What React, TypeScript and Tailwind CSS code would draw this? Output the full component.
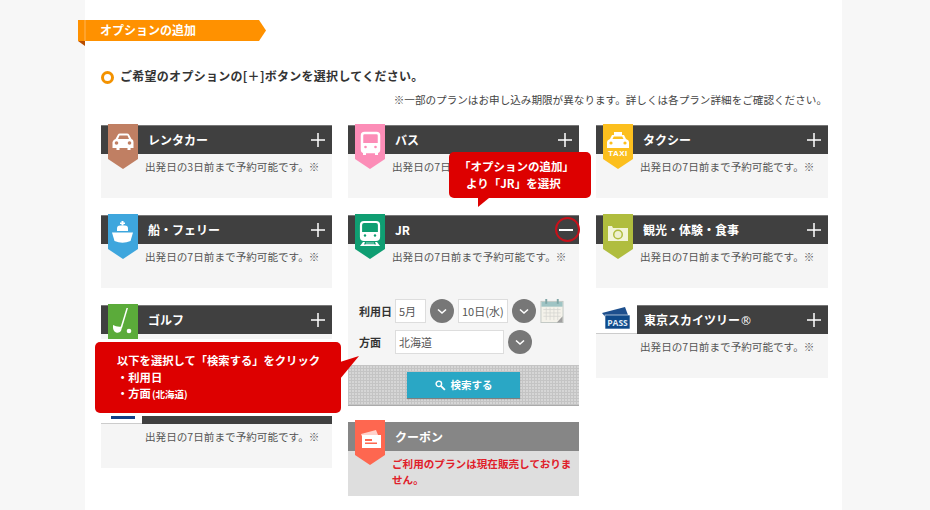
import React from "react";

function Tab({ color, children }: { color: string; children: React.ReactNode }) {
  return (
    <div className="absolute left-[7px] top-[-2px] w-[30px] h-[45px]">
      <svg width="30" height="45" viewBox="0 0 30 45" className="block">
        <path d="M0 0H30V35L15 45L0 35Z" fill={color} />
        {children}
      </svg>
    </div>
  );
}

const Car = () => (
  <g fill="#fff">
    <path d="M7.500 15 L10 10.500 Q10.500 9.500 12 9.500 H19 Q20.500 9.500 21 10.500 L23.500 15 Q25.500 15.500 25.500 18 V24 H22.500 V26 H19.500 V24 H11.500 V26 H8.500 V24 H4.500 V18 Q5.500 15.500 7.500 15Z" />
    <path d="M10 15 L11.500 11.500 H19.500 L21 15Z" fill="#c07f63" />
    <circle cx="8.500" cy="19" r="1.800" fill="#c07f63" />
    <circle cx="21.500" cy="19" r="1.800" fill="#c07f63" />
  </g>
);
const Bus = () => (
  <g>
    <rect x="7" y="9" width="17" height="19" rx="2.500" fill="none" stroke="#fff" strokeWidth="2.500" />
    <rect x="7" y="19" width="17" height="8" fill="#fff" />
    <rect x="8" y="28" width="3" height="3" fill="#fff" />
    <rect x="20" y="28" width="3" height="3" fill="#fff" />
    <circle cx="10.500" cy="23" r="1.300" fill="#fc8db7" />
    <circle cx="20.500" cy="23" r="1.300" fill="#fc8db7" />
  </g>
);
const Taxi = () => (
  <g fill="#fff">
    <rect x="11" y="8" width="8" height="3" />
    <path d="M7 15 L9 11 H21 L23 15 Q26 16 26 18 V24 H4 V18 Q4 16 7 15Z" />
    <path d="M9.500 15 L10.800 12.500 H19.200 L20.500 15Z" fill="#fcbf1e" />
    <circle cx="8" cy="19" r="1.600" fill="#fcbf1e" />
    <circle cx="22" cy="19" r="1.600" fill="#fcbf1e" />
    <text x="15" y="31.500" textAnchor="middle" fontSize="8" fontWeight="700" fontFamily="Liberation Sans, sans-serif" letterSpacing="0.500">TAXI</text>
  </g>
);
const Ship = () => (
  <g fill="#fff">
    <path d="M13.500 7H15.500V8.500H17V10H15.500V11.500H13.500V10H12V8.500H13.500Z" />
    <path d="M9 17 V14.500 Q9 11.500 12 11.500 H17 Q20 11.500 20 14.500 V17Z" />
    <path d="M4 18.500 H25 L22.500 27 Q14.500 30.500 6.500 27Z" />
  </g>
);
const Train = () => (
  <g>
    <rect x="6" y="8" width="18" height="18" rx="3" fill="none" stroke="#fff" strokeWidth="2.200" />
    <rect x="6" y="18" width="18" height="7" fill="#fff" />
    <circle cx="10" cy="21.500" r="1.200" fill="#0f9e72" />
    <circle cx="20" cy="21.500" r="1.200" fill="#0f9e72" />
    <path d="M8 28 L5 32 H25 L22 28 H20 L21 30.500 H9 L10 28Z" fill="#fff" />
    <path d="M11 29 H19 M10.500 30.500 H19.500" stroke="#fff" strokeWidth="0.600" />
  </g>
);
const Camera = () => (
  <g>
    <path d="M5 12 H9 L10 14 H25 V27 H5Z" fill="#f2f4d8" />
    <circle cx="15" cy="20.500" r="5" fill="#b0bd3e" />
    <circle cx="15" cy="20.500" r="3.500" fill="#eef0cf" />
  </g>
);
const Golf = () => (
  <g fill="#fff">
    <path d="M20 4 L14 24 L12.500 23.500 L18.500 4Z" />
    <path d="M5 21 Q9 23.500 14.200 22.500 L13 27 Q11 29.500 8 28.500 Q4.500 27 5 21Z" />
    <circle cx="21" cy="27" r="2.300" />
  </g>
);
const Coupon = () => (
  <g>
    <path d="M6 14 L21 10 L23 15 L8 19Z" fill="#fff" opacity="0.700" />
    <rect x="7" y="15" width="19" height="13" fill="#fff" />
    <rect x="10" y="19" width="7" height="2" fill="#fe6750" />
    <rect x="10" y="22.500" width="12" height="1.500" fill="#fe6750" />
  </g>
);

function Plus() {
  return (
    <svg width="14" height="14" viewBox="0 0 14 14" className="block">
      <path d="M0 7H14M7 0V14" stroke="#fff" strokeWidth="1.500" />
    </svg>
  );
}

function Header({ title, tab, minus }: { title: string; tab: React.ReactNode; minus?: boolean }) {
  return (
    <div className="relative h-[29px] bg-[#404040] border-t border-[#777] flex items-center justify-between pl-[47px] pr-[7px]">
      {tab}
      <span className="text-[12px] font-bold text-white">{title}</span>
      {minus ? (
        <span className="absolute right-[-1px] top-[1px] w-[25px] h-[25px] rounded-full border-2 border-[#c8101a] flex items-center justify-center">
          <span className="block w-[14px] h-[2px] bg-white mr-[3px]" />
        </span>
      ) : (
        <Plus />
      )}
    </div>
  );
}

const BODY = "出発日の7日前まで予約可能です。※";

function Note({ text = BODY }: { text?: string }) {
  return (
    <p className="pl-[44px] pt-[4px] text-[10.600px] leading-[18px] text-[#555] whitespace-nowrap h-[44px]">{text}</p>
  );
}

function Card({ title, tab, text }: { title: string; tab: React.ReactNode; text?: string }) {
  return (
    <div className="bg-[#f5f5f5]">
      <Header title={title} tab={tab} />
      <Note text={text} />
    </div>
  );
}

function Chevron({ className = "" }: { className?: string }) {
  return (
    <span className={`w-[24px] h-[24px] rounded-full bg-[#777] flex items-center justify-center shrink-0 ${className}`}>
      <svg width="10" height="7" viewBox="0 0 10 7">
        <path d="M1 1.500L5 5L9 1.500" fill="none" stroke="#fff" strokeWidth="1.600" />
      </svg>
    </span>
  );
}

function Field({ text, w }: { text: string; w: string }) {
  return (
    <span className={`${w} h-[24px] bg-white border border-[#ddd] flex items-center pl-[3px] text-[11px] text-[#555] whitespace-nowrap shrink-0`}>
      {text}
    </span>
  );
}

function Calendar() {
  return (
    <svg width="24" height="24" viewBox="0 0 24 25" className="block shrink-0">
      <rect x="0.500" y="2.500" width="23" height="22" fill="#f4f2ea" stroke="#c2c8c4" />
      <rect x="1" y="3" width="22" height="5" fill="#9fc4c4" />
      <rect x="5" y="0" width="2" height="5" fill="#7fa5a5" />
      <rect x="17" y="0" width="2" height="5" fill="#7fa5a5" />
      <path d="M3 11H21M3 14.500H21M3 18H21M6 9V22M10 9V22M14 9V22M18 9V22" stroke="#d4d4d0" strokeWidth="0.800" />
      <path d="M23 18L17 24.500H23Z" fill="#a0a0a0" />
    </svg>
  );
}

function PassIcon() {
  return (
    <svg width="30" height="23" viewBox="0 0 30 23" className="block absolute left-[5px] top-[2px]">
      <path d="M1 6L24 0L27 8L6 12Z" fill="#1d4f8d" />
      <rect x="4" y="8" width="25" height="14" fill="#0f4a8a" stroke="#fff" strokeWidth="0.600" />
      <text x="16.500" y="19" textAnchor="middle" fontSize="8.500" fontWeight="700" fill="#dfe9f5" fontFamily="Open Sans, sans-serif">PASS</text>
    </svg>
  );
}

function BlueLogo() {
  return (
    <svg width="24" height="4" viewBox="0 0 24 4" className="block absolute left-[10px] top-[20px]">
      <rect width="24" height="4" fill="#123f86" />
    </svg>
  );
}

export default function App() {
  return (
    <div className="w-[930px] h-[510px] overflow-hidden bg-[#f7f7f7] flex pl-[85px] pr-[88px] font-['Noto_Sans_CJK_JP','Noto_Sans',sans-serif]">
      <main className="relative w-[757px] h-[510px] bg-white pl-[16px] pr-[14px] pt-[20px]">
        {/* Section ribbon */}
        <div className="relative ml-[-23px] w-[188px] h-[21px]">
          <svg width="188" height="26" viewBox="0 0 188 26" className="absolute inset-0 block">
            <path d="M0 0H181L188 10.500L181 21H0Z" fill="#ff9100" />
            <path d="M0 21H7V26Z" fill="#b94e00" />
            <path d="M7 0V21" stroke="#ffc680" strokeWidth="0.700" />
          </svg>
          <span className="relative block pl-[22px] text-[12px] leading-[19px] font-bold text-white">オプションの追加</span>
        </div>

        {/* Lead */}
        <div className="mt-[26px] flex items-center gap-[6px] h-[18px]">
          <span className="w-[13px] h-[13px] rounded-full border-[3px] border-[#f39200] shrink-0 mt-[2px]" />
          <span className="text-[12px] tracking-[0.280px] font-bold text-[#333]">ご希望のオプションの[＋]ボタンを選択してください。</span>
        </div>
        <p className="mt-[7px] text-right pr-[1px] text-[10.600px] leading-[16px] text-[#444]">
          ※一部のプランはお申し込み期限が異なります。詳しくは各プラン詳細をご確認ください。
        </p>

        {/* Columns */}
        <div className="mt-[17px] flex">
          <div className="w-[231px] flex flex-col gap-[17px]">
            <Card title="レンタカー" tab={<Tab color="#c07f63"><Car /></Tab>} text="出発日の3日前まで予約可能です。※" />
            <Card title="船・フェリー" tab={<Tab color="#3ea6dd"><Ship /></Tab>} />
            <Card title="ゴルフ" tab={<Tab color="#5bab3a"><Golf /></Tab>} />
            <div className="bg-[#f5f5f5]">
              <div className="relative h-[29px] flex">
                <div className="w-[41px] bg-white border-b border-[#ccc] relative">
                  <BlueLogo />
                </div>
                <div className="flex-1 bg-[#404040]" />
              </div>
              <Note />
            </div>
          </div>

          <div className="w-[231px] ml-[16px] flex flex-col">
            <Card title="バス" tab={<Tab color="#fc8db7"><Bus /></Tab>} />
            <div className="bg-[#f5f5f5] mt-[17px]">
              <Header title="JR" tab={<Tab color="#0f9e72"><Train /></Tab>} minus />
              <Note />
              <div className="pl-[11px] flex flex-col gap-[7px] pt-[11px]">
                <div className="flex items-center">
                  <span className="w-[36px] text-[11px] font-bold text-[#333]">利用日</span>
                  <Field text="5月" w="w-[31px]" />
                  <Chevron className="ml-[4px]" />
                  <Field text="10日(水)" w="w-[50px] ml-[4px]" />
                  <Chevron className="ml-[4px]" />
                  <span className="ml-[4px]"><Calendar /></span>
                </div>
                <div className="flex items-center">
                  <span className="w-[36px] text-[11px] font-bold text-[#333]">方面</span>
                  <Field text="北海道" w="w-[109px]" />
                  <Chevron className="ml-[4px]" />
                </div>
              </div>
              <div className="mt-[11px] h-[41px] border-b border-[#aaa] flex justify-center pt-[7px] bg-[#d6d6d6] bg-[repeating-linear-gradient(0deg,#c4c4c4_0,#c4c4c4_1px,transparent_1px,transparent_3px),repeating-linear-gradient(90deg,#c4c4c4_0,#c4c4c4_1px,transparent_1px,transparent_3px)]">
                <button className="w-[113px] h-[26px] bg-[#2aa7c5] shadow-[0_1px_1px_rgba(0,0,0,0.35)] flex items-center justify-center gap-[5px] text-[10.500px] font-bold text-white">
                  <svg width="11" height="11" viewBox="0 0 10 10">
                    <circle cx="3.500" cy="3.500" r="2.500" fill="none" stroke="#fff" strokeWidth="1.300" />
                    <path d="M5.500 5.500L9 9" stroke="#fff" strokeWidth="1.700" />
                  </svg>
                  検索する
                </button>
              </div>
            </div>
            <div className="bg-[#dedede] h-[74px] mt-[16px]">
              <div className="relative h-[29px] bg-[#868686] flex items-center pl-[47px]">
                <Tab color="#fe6750"><Coupon /></Tab>
                <span className="text-[12px] font-bold text-white">クーポン</span>
              </div>
              <p className="pl-[44px] pt-[5px] text-[10.600px] leading-[16px] font-bold text-[#e0202a]">
                ご利用のプランは現在販売しておりません。
              </p>
            </div>
          </div>

          <div className="w-[232px] ml-[17px] flex flex-col gap-[17px]">
            <Card title="タクシー" tab={<Tab color="#fcbf1e"><Taxi /></Tab>} />
            <Card title="観光・体験・食事" tab={<Tab color="#b0bd3e"><Camera /></Tab>} />
            <div className="bg-[#f5f5f5]">
              <div className="relative h-[29px] flex">
                <div className="w-[41px] bg-white border-b border-[#ccc] relative">
                  <PassIcon />
                </div>
                <div className="flex-1 bg-[#404040] border-t border-[#777] flex items-center justify-between pl-[7px] pr-[7px]">
                  <span className="text-[12px] font-bold text-white">
                    東京スカイツリー<span className="font-['DejaVu_Sans',sans-serif] font-normal">®</span>
                  </span>
                  <Plus />
                </div>
              </div>
              <Note />
            </div>
          </div>
        </div>

        {/* Callouts */}
        <div className="absolute left-[364px] top-[152px] w-[142px] h-[46px] rounded-[5px] bg-[#dd0000] pl-[10px] pt-[6px] text-[11.500px] leading-[17px] font-bold text-white">
          <div>「オプションの追加」</div>
          <div className="pl-[7px]">より「JR」を選択</div>
          <svg width="14" height="10" viewBox="0 0 14 10" className="absolute left-[26px] top-[46px]">
            <path d="M3 0H14L3 9Z" fill="#dd0000" />
          </svg>
        </div>
        <div className="absolute left-[10px] top-[342px] w-[246px] h-[71px] rounded-[5px] bg-[#dd0000] shadow-[0_0_0_3px_#fff] pl-[22px] pt-[10px] text-[11.300px] leading-[16.500px] font-bold text-white">
          <div>以下を選択して「検索する」をクリック</div>
          <div>・利用日</div>
          <div>・方面<span className="text-[9.500px] ml-[1px]">(北海道)</span></div>
          <svg width="20" height="26" viewBox="0 0 20 26" className="absolute left-[245px] top-[13px]">
            <path d="M0 7L19 1L0 24Z" fill="#dd0000" />
          </svg>
        </div>
      </main>
    </div>
  );
}
